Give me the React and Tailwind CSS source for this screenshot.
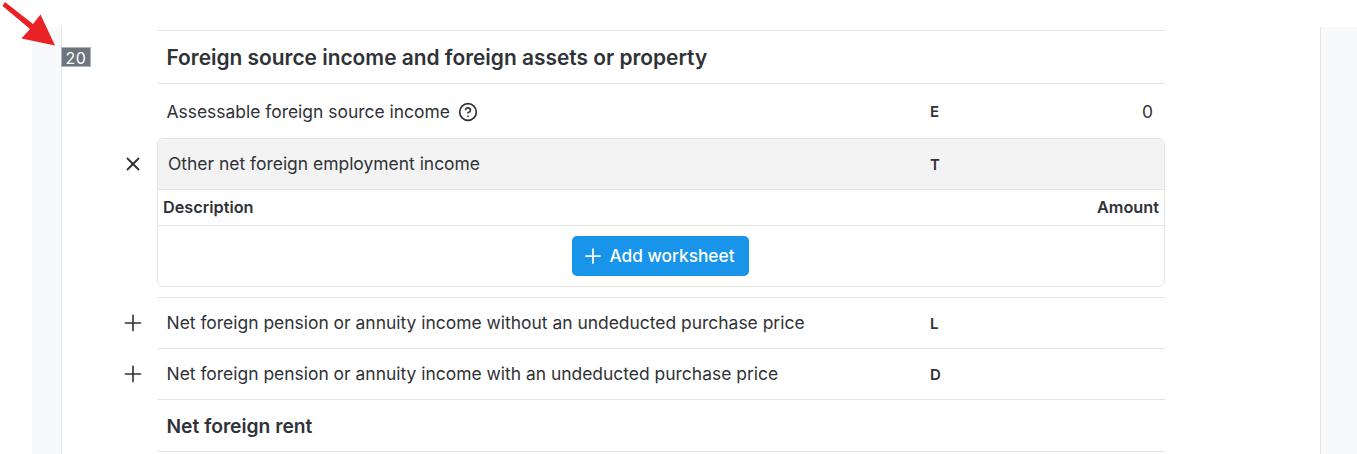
import React from "react";
import { Plus, X, CircleHelp } from "lucide-react";

// One line of the tax form: expand icon on the left, label, code letter and value
function FormRow({ icon, label, code }) {
  return (
    <div className="flex">
      <div className="w-[48px] shrink-0 flex items-center justify-center pr-[1px]">{icon}</div>
      <div className="flex-1 border-t border-[#e5e5e7] flex items-center pl-[9.5px] pr-[12px] h-[51px]">
        <span className="w-[763.5px] text-[17.45px]">{label}</span>
        <span className="text-[15px] font-semibold w-[40px] pt-[2px]">{code}</span>
      </div>
    </div>
  );
}

export default function App() {
  return (
    <div className="relative h-[454px] overflow-hidden bg-white flex pt-[27px] pl-[32px] text-[#2f3237] font-['Inter',sans-serif]">
      <div className="w-[30px] shrink-0 bg-[#f8f9fb] border-r border-[#e3e4e8]" />

      <main className="flex-1 pl-[47px] pt-[3px]">
        <div className="w-[1056px]">
          <div className="flex">
            <div className="w-[48px] shrink-0" />
            <div className="flex-1 border-t border-[#e5e5e7] flex items-center pl-[9.5px] pt-[2px] h-[53px] text-[20.9px] font-semibold">
              Foreign source income and foreign assets or property
            </div>
          </div>

          <div className="flex">
            <div className="w-[48px] shrink-0" />
            <div className="flex-1 border-t border-[#e5e5e7] flex items-center pl-[9.5px] pr-[12px] pt-[2px] h-[55px]">
              <div className="w-[763.5px] flex items-center gap-[8px] text-[17.45px]">
                <span>Assessable foreign source income</span>
                <CircleHelp size={20} strokeWidth={2} />
              </div>
              <span className="text-[15px] font-semibold w-[40px]">E</span>
              <span className="flex-1 text-right text-[17.45px]">0</span>
            </div>
          </div>

          <div className="flex">
            <div className="w-[48px] shrink-0 h-[51px] flex items-center justify-center">
              <X size={22} strokeWidth={2} />
            </div>
            <div className="flex-1 border border-[#e5e5e7] rounded-[6px] overflow-hidden h-[149px]">
              <div className="h-[51px] bg-[#f3f3f4] border-b border-[#e5e5e7] flex items-center pl-[10px] text-[17.45px]">
                <span className="w-[762px]">Other net foreign employment income</span>
                <span className="text-[15px] font-semibold pt-[2px]">T</span>
              </div>
              <div className="h-[36px] border-b border-[#e5e5e7] flex items-center justify-between px-[5px] text-[16.25px] font-semibold">
                <span>Description</span>
                <span>Amount</span>
              </div>
              <div className="flex justify-center pt-[10px] pr-[2px]">
                <button className="h-[40px] w-[177px] rounded-[5px] bg-[#1895eb] text-white flex items-center justify-center gap-[4px] pr-[4px] text-[17.3px] font-medium">
                  <Plus size={24} strokeWidth={1.75} />
                  Add worksheet
                </button>
              </div>
            </div>
          </div>

          <div className="h-[10px]" />
          <FormRow
            icon={<Plus size={26} strokeWidth={1.5} />}
            label="Net foreign pension or annuity income without an undeducted purchase price"
            code="L"
          />
          <FormRow
            icon={<Plus size={26} strokeWidth={1.5} />}
            label="Net foreign pension or annuity income with an undeducted purchase price"
            code="D"
          />
          <div className="flex">
            <div className="w-[48px] shrink-0" />
            <div className="flex-1 border-y border-[#e5e5e7] flex items-center pl-[9.5px] pt-[2px] h-[53px] text-[19.25px] font-semibold">
              Net foreign rent
            </div>
          </div>
        </div>
      </main>

      <div className="w-[37px] shrink-0 bg-[#f8f9fb] border-l border-[#e3e4e8]" />

      {/* badge and annotation arrow sit over the page */}
      <div className="absolute left-[61px] top-[47px] w-[30px] h-[20px] bg-[#6c757d] border border-[#b0b5ba] text-white text-[16px] tracking-[0.5px] flex items-center justify-center pt-[1px]">
        20
      </div>
      <svg className="absolute left-0 top-0" width="60" height="50" viewBox="0 0 60 50">
        <path d="M5 2 L2.500 6 L30 29 L21.500 38.500 L55 45.500 L40.500 14.500 L33 24 Z" fill="#ea2226" />
      </svg>
    </div>
  );
}
